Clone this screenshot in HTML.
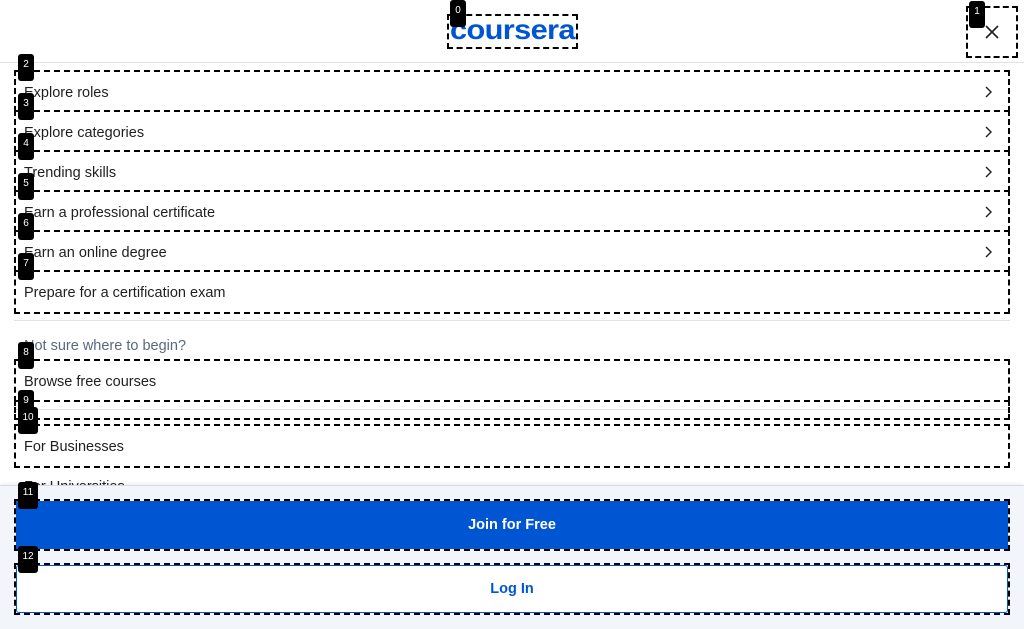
<!DOCTYPE html>
<html><head><style>
*{margin:0;padding:0;box-sizing:border-box}
body{width:1024px;height:629px;overflow:hidden;background:#fff;font-family:"Liberation Sans",sans-serif;position:relative;color:#1f1f1f}
.a{position:absolute}
.box{position:absolute;border:2px dashed #000}
.lb{position:absolute;background:#000;color:#fff;font-size:10px;width:16px;height:27px;border-radius:3px;text-align:center;padding-top:5px}
.t{position:absolute;left:24px;font-size:14.5px;color:#1f1f1f}
.ch{position:absolute;left:984px;width:8px;height:12px}
</style></head><body>
<div class="a" style="left:0;top:62px;width:1024px;height:1px;background:#dfe3ea"></div>
<div class="a" style="left:450px;top:14px;font-size:28px;font-weight:bold;color:#0056d2;letter-spacing:-0.6px;transform:scaleX(1.1);transform-origin:left top">coursera</div>
<svg class="a" style="left:985px;top:25px" width="14" height="14"><path d="M1 1L13 13M13 1L1 13" stroke="#1f1f1f" stroke-width="1.6"/></svg>

<div class="t" style="top:85px">Explore roles</div>
<div class="t" style="top:125px">Explore categories</div>
<div class="t" style="top:165px">Trending skills</div>
<div class="t" style="top:205px">Earn a professional certificate</div>
<div class="t" style="top:245px">Earn an online degree</div>
<div class="t" style="top:285px">Prepare for a certification exam</div>
<svg class="ch" style="top:86px" viewBox="0 0 8 12"><path d="M2 1l5 5-5 5" fill="none" stroke="#1f1f1f" stroke-width="1.4"/></svg>
<svg class="ch" style="top:126px" viewBox="0 0 8 12"><path d="M2 1l5 5-5 5" fill="none" stroke="#1f1f1f" stroke-width="1.4"/></svg>
<svg class="ch" style="top:166px" viewBox="0 0 8 12"><path d="M2 1l5 5-5 5" fill="none" stroke="#1f1f1f" stroke-width="1.4"/></svg>
<svg class="ch" style="top:206px" viewBox="0 0 8 12"><path d="M2 1l5 5-5 5" fill="none" stroke="#1f1f1f" stroke-width="1.4"/></svg>
<svg class="ch" style="top:246px" viewBox="0 0 8 12"><path d="M2 1l5 5-5 5" fill="none" stroke="#1f1f1f" stroke-width="1.4"/></svg>

<div class="a" style="left:14px;top:320px;width:996px;height:1px;background:#dfe3ea"></div>
<div class="t" style="top:338px;color:#5b6780">Not sure where to begin?</div>
<div class="t" style="top:374px">Browse free courses</div>
<div class="a" style="left:14px;top:409px;width:996px;height:1px;background:#dfe3ea"></div>
<div class="t" style="top:439px">For Businesses</div>
<div class="t" style="top:479px">For Universities</div>

<div class="a" style="left:0;top:485px;width:1024px;height:144px;background:#f2f5fa;border-top:1px solid #d5dbe5;box-shadow:0 -2px 4px rgba(0,0,0,.06)"></div>
<div class="a" style="left:16px;top:501px;width:992px;height:48px;background:#0056d2;color:#fff;font-weight:bold;font-size:14.5px;text-align:center;line-height:48px">Join for Free</div>
<div class="a" style="left:16px;top:565px;width:992px;height:48px;background:#fff;border:1px solid #0056d2;border-radius:3px;color:#0056d2;font-weight:bold;font-size:14.5px;text-align:center;line-height:46px">Log In</div>

<div class="box" style="left:447px;top:14px;width:131px;height:35px"></div>
<div class="box" style="left:966px;top:6px;width:52px;height:52px"></div>
<div class="box" style="left:14px;top:70px;width:996px;height:42px"></div>
<div class="box" style="left:14px;top:110px;width:996px;height:42px"></div>
<div class="box" style="left:14px;top:150px;width:996px;height:42px"></div>
<div class="box" style="left:14px;top:190px;width:996px;height:42px"></div>
<div class="box" style="left:14px;top:230px;width:996px;height:42px"></div>
<div class="box" style="left:14px;top:270px;width:996px;height:44px"></div>
<div class="box" style="left:14px;top:359px;width:996px;height:43px"></div>
<div class="box" style="left:14px;top:400px;width:996px;height:20px"></div>
<div class="box" style="left:14px;top:424px;width:996px;height:44px"></div>
<div class="box" style="left:14px;top:499px;width:996px;height:52px"></div>
<div class="box" style="left:14px;top:563px;width:996px;height:52px"></div>

<div class="lb" style="left:450px;top:0px">0</div>
<div class="lb" style="left:969px;top:1px">1</div>
<div class="lb" style="left:18px;top:54px">2</div>
<div class="lb" style="left:18px;top:93px">3</div>
<div class="lb" style="left:18px;top:133px">4</div>
<div class="lb" style="left:18px;top:173px">5</div>
<div class="lb" style="left:18px;top:213px">6</div>
<div class="lb" style="left:18px;top:253px">7</div>
<div class="lb" style="left:18px;top:342px">8</div>
<div class="lb" style="left:18px;top:390px">9</div>
<div class="lb" style="left:18px;top:407px;width:20px">10</div>
<div class="lb" style="left:18px;top:482px;width:20px">11</div>
<div class="lb" style="left:18px;top:546px;width:20px">12</div>
</body></html>
